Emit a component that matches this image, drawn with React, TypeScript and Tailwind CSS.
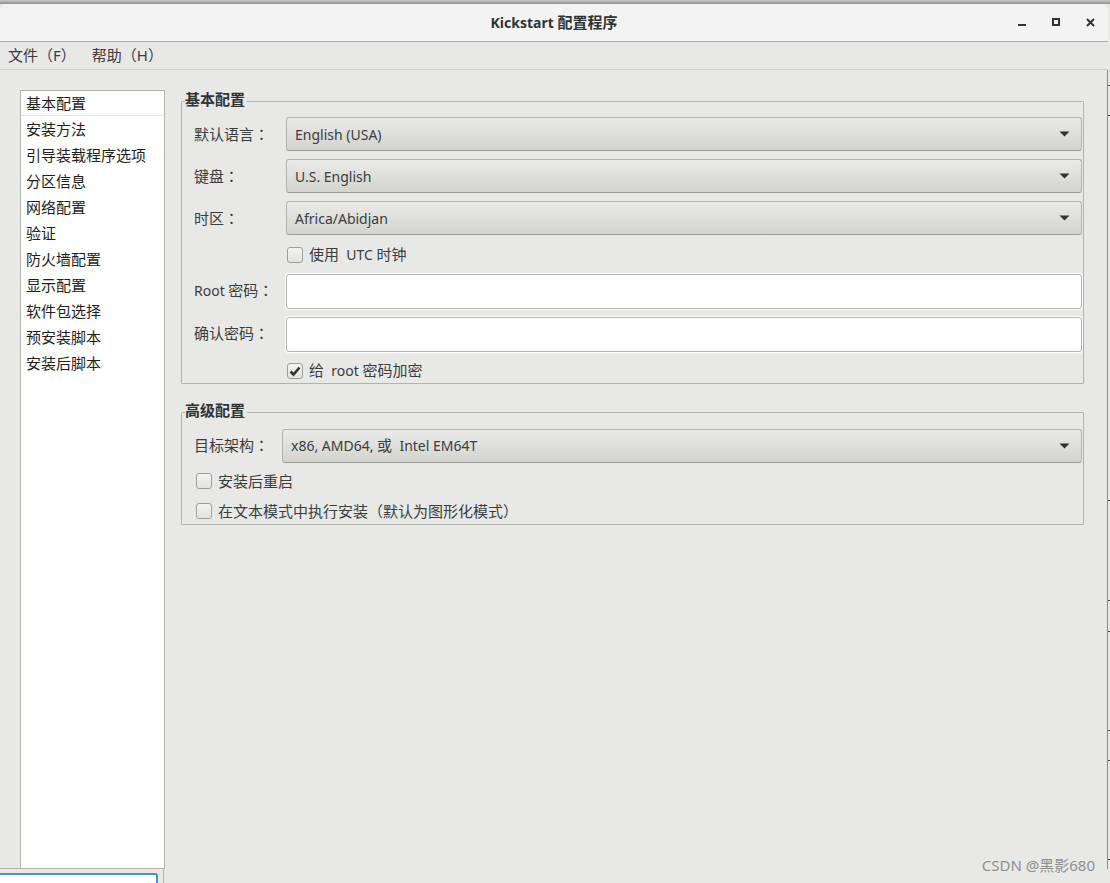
import React from "react";

const font = { fontFamily: '"Noto Sans", "Noto Sans CJK SC", sans-serif' };

function Z({ children }: { children: React.ReactNode }) {
  return <span className="text-[15px]">{children}</span>;
}

function Colon() {
  return <span className="text-[15px] [font-family:'Noto_Sans_CJK_TC',sans-serif]">：</span>;
}

function Combo({ text, textClass = "" }: { text: React.ReactNode; textClass?: string }) {
  return (
    <div className="flex h-[34px] flex-1 items-center justify-between rounded-[3px] border border-[#b3b3ae] border-b-[#9d9d98] bg-gradient-to-b from-[#eaeae8] to-[#d3d3d0] pl-2 pr-[10px] text-[14px] text-[#3a3d3e]">
      <span className={`whitespace-pre ${textClass}`}>{text}</span>
      <svg width="11" height="6" viewBox="0 0 11 6" className="mr-[1px]">
        <path d="M0.5 0.5H10.5L5.5 5.5Z" fill="#2e3436" />
      </svg>
    </div>
  );
}

function Check({ label, checked = false, className = "", labelClass = "pb-[2px]" }: { label: React.ReactNode; checked?: boolean; className?: string; labelClass?: string }) {
  return (
    <div className={`flex h-[18px] items-center gap-[6px] text-[14px] text-[#3a3d3e] ${className}`}>
      <span className="flex h-4 w-4 items-center justify-center rounded-[3px] border border-[#9f9f9a] bg-gradient-to-b from-[#f2f2f1] to-[#e2e2e0]">
        {checked && (
          <svg width="12" height="11" viewBox="0 0 12 11">
            <path d="M1.5 5.5L4.5 8.5L10.5 1.5" fill="none" stroke="#2e3436" strokeWidth="2.6" />
          </svg>
        )}
      </span>
      <span className={`whitespace-pre ${labelClass}`}>{label}</span>
    </div>
  );
}

function FieldLabel({ children, className = "w-[104px]" }: { children: React.ReactNode; className?: string }) {
  return <div className={`${className} shrink-0 whitespace-pre pl-[12px] text-[14px] text-[#3a3d3e]`}>{children}</div>;
}

function Entry() {
  return <div className="h-[35px] flex-1 rounded-[3px] border border-[#b3b3ae] bg-white shadow-[0_0_0_1px_#ffffff]" />;
}

const items = ["基本配置", "安装方法", "引导装载程序选项", "分区信息", "网络配置", "验证", "防火墙配置", "显示配置", "软件包选择", "预安装脚本", "安装后脚本"];
const ticks = [85, 115, 500, 600, 631, 730, 760, 859];

export default function App() {
  return (
    <div style={font} className="relative h-[883px] w-[1110px] overflow-hidden bg-[#e8e8e7]">
      <div className="h-[4px] bg-gradient-to-b from-[#c9c9c7] to-[#8f8f8d]" />
      <div className="mr-[2px] flex h-[38px] items-center justify-center rounded-t-[6px] border-b border-[#a9a9a6] bg-[#f3f3f3] text-[14px] font-bold text-[#2e3436]">
        <span className="whitespace-pre">Kickstart <Z>配置程序</Z></span>
        <div className="absolute right-[15px] top-[17px] flex items-center gap-[26px]">
          <svg width="8" height="10" viewBox="0 0 8 10"><rect x="0" y="7" width="8" height="2" fill="#2e3436" /></svg>
          <svg width="8" height="8" viewBox="0 0 8 8"><rect x="1" y="1" width="6" height="6" fill="none" stroke="#2e3436" strokeWidth="2" /></svg>
          <svg width="9" height="9" viewBox="0 0 9 9"><path d="M1 1L8 8M8 1L1 8" stroke="#2e3436" strokeWidth="2" /></svg>
        </div>
      </div>
      <div className="mr-[2px] flex h-[28px] items-center gap-[16px] border-b border-[#cfcfcc] pl-[8px] text-[14px] text-[#3a3d3e]">
        <Z>文件（F）</Z>
        <Z>帮助（H）</Z>
      </div>
      <div className="mr-[2px] flex border-r border-[#8e8e8c]">
        <div className="ml-[20px] mt-[20px] h-[779px] w-[145px] shrink-0 border border-[#b3b3ae] bg-white text-[15px] leading-[20px] text-[#1e1e1e]">
          {items.map((t, i) => (
            <div key={t} className={`flex items-center pl-[5px] ${i === 0 ? "h-[25px] border-b border-[#e4e4e2]" : "h-[26px]"}`}>
              {t}
            </div>
          ))}
        </div>
        <div className="ml-[16px] mr-[23px] flex-1 pt-[21px]">
          <fieldset className="h-[293px] rounded-[1px] border border-[#b3b3ae] px-0 pb-0">
            <legend className="ml-[3px] pb-[4px] pr-[2px] text-[15px] font-bold leading-[16px] text-[#2e3436]">基本配置</legend>
            <div className="mt-[6px] flex flex-col pr-[1px]">
              <div className="flex items-center"><FieldLabel><Z>默认语言</Z><Colon /></FieldLabel><Combo text="English (USA)" /></div>
              <div className="mt-[8px] flex items-center"><FieldLabel><Z>键盘</Z><Colon /></FieldLabel><Combo text="U.S. English" /></div>
              <div className="mt-[8px] flex items-center"><FieldLabel><Z>时区</Z><Colon /></FieldLabel><Combo text="Africa/Abidjan" /></div>
              <Check label={<><Z>使用</Z>  UTC <Z>时钟</Z></>} className="ml-[105px] mt-[11px]" />
              <div className="mt-[10px] flex items-center"><FieldLabel className="w-[104px] pb-[2px]">Root <Z>密码</Z><Colon /></FieldLabel><Entry /></div>
              <div className="mt-[8px] flex items-center"><FieldLabel className="w-[104px] pb-[2px]"><Z>确认密码</Z><Colon /></FieldLabel><Entry /></div>
              <Check label={<><Z>给</Z>  root <Z>密码加密</Z></>} checked className="ml-[105px] mt-[10px]" />
            </div>
          </fieldset>
          <fieldset className="mt-[18px] h-[123px] rounded-[1px] border border-[#b3b3ae] px-0 pb-0">
            <legend className="ml-[3px] pb-[4px] pr-[2px] text-[15px] font-bold leading-[16px] text-[#2e3436]">高级配置</legend>
            <div className="mt-[7px] flex flex-col pr-[1px]">
              <div className="flex items-center">
                <FieldLabel className="w-[100px] pb-[2px]"><Z>目标架构</Z><Colon /></FieldLabel>
                <Combo text={<>x86, AMD64, <Z>或</Z>  Intel EM64T</>} textClass="pb-[2px]" />
              </div>
              <Check label={<Z>安装后重启</Z>} labelClass="" className="ml-[14px] mt-[9px]" />
              <Check label={<Z>在文本模式中执行安装（默认为图形化模式）</Z>} labelClass="" className="ml-[14px] mt-[12px]" />
            </div>
          </fieldset>
        </div>
      </div>
      <div className="absolute bottom-0 left-0 h-[15px] w-[164px] border-r border-t border-[#b3b3ae] bg-[#e8e8e7]">
        <div className="mt-[4px] h-[12px] w-[158px] rounded-tr-[3px] border-r-2 border-t-2 border-[#4a90d9] bg-white" />
      </div>
      {ticks.map((y) => (
        <div key={y} style={{ top: y }} className="absolute right-0 h-[1px] w-[2px] bg-[#4a4a4a]" />
      ))}
      <div className="absolute bottom-[7px] right-[15px] text-[15px] text-[#8f8f8f]">CSDN @黑影680</div>
    </div>
  );
}
